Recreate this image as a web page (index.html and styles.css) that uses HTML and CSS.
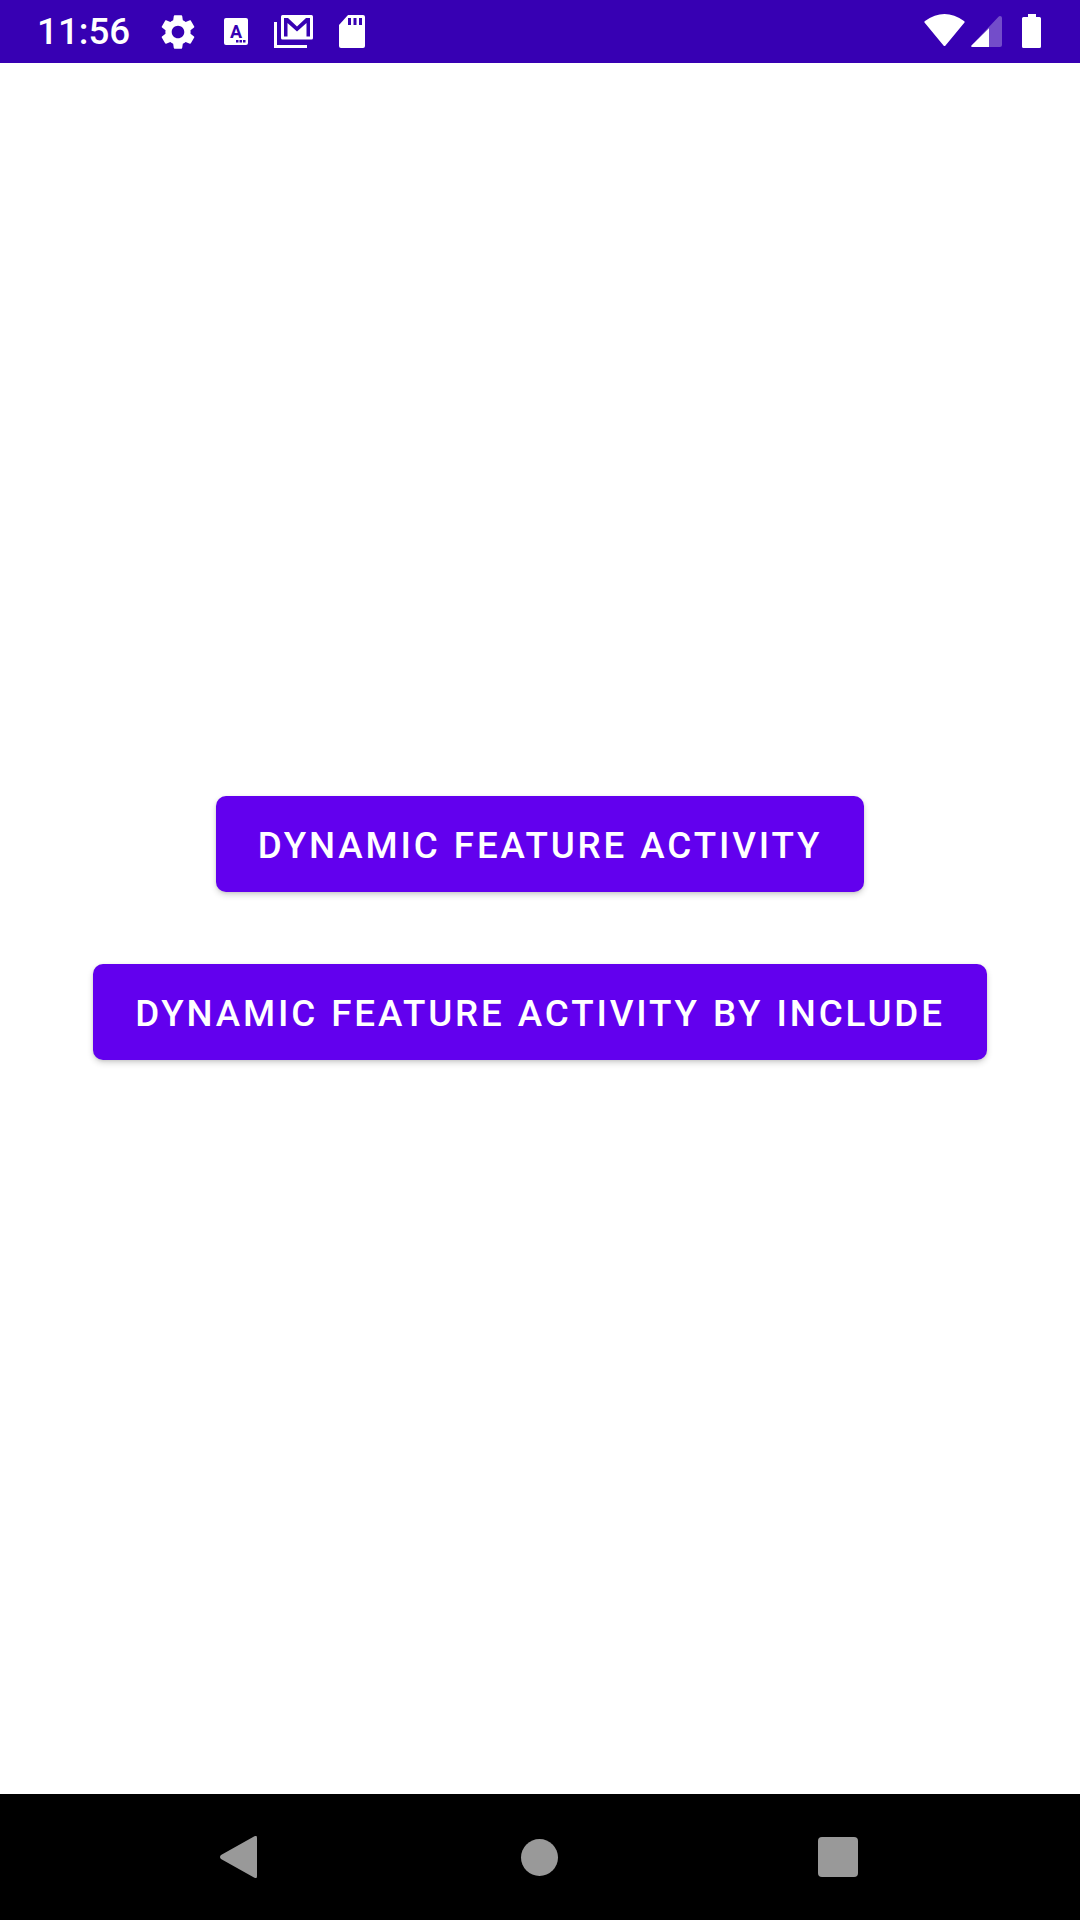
FILE: index.html
```html
<!DOCTYPE html>
<html lang="en">
<head>
<meta charset="utf-8">
<title>Dynamic Feature</title>
<link rel="stylesheet" href="styles.css">
</head>
<body>
<div class="screen">
  <header class="status-bar">
    <div class="status-left">
      <span class="clock">11:56</span>
      <svg class="icon-gear" viewBox="0 0 24 24"><path fill="#fff" d="M19.14 12.94c.04-.3.06-.61.06-.94 0-.32-.02-.64-.07-.94l2.03-1.58c.18-.14.23-.41.12-.61l-1.92-3.32c-.12-.22-.37-.29-.59-.22l-2.39.96c-.5-.38-1.03-.7-1.62-.94l-.36-2.54c-.04-.24-.24-.41-.48-.41h-3.84c-.24 0-.43.17-.47.41l-.36 2.54c-.59.24-1.13.57-1.62.94l-2.39-.96c-.22-.08-.47 0-.59.22L2.74 8.87c-.12.21-.08.47.12.61l2.03 1.58c-.05.3-.09.63-.09.94s.02.64.07.94l-2.03 1.58c-.18.14-.23.41-.12.61l1.92 3.32c.12.22.37.29.59.22l2.39-.96c.5.38 1.03.7 1.62.94l.36 2.54c.05.24.24.41.48.41h3.84c.24 0 .44-.17.47-.41l.36-2.54c.59-.24 1.13-.56 1.62-.94l2.39.96c.22.08.47 0 .59-.22l1.92-3.32c.12-.22.07-.47-.12-.61l-2.01-1.58zM12 15.6c-1.98 0-3.6-1.62-3.6-3.6s1.62-3.6 3.6-3.6 3.6 1.62 3.6 3.6-1.62 3.6-3.6 3.6z"/></svg>
      <svg class="icon-font" viewBox="0 0 24 27"><rect width="24" height="27" rx="2" fill="#fff"/><text x="12" y="20" class="font-letter">A</text><rect x="12" y="22" width="2.500" height="2.500" fill="#3700b3"/><rect x="15.500" y="22" width="2.500" height="2.500" fill="#3700b3"/><rect x="19" y="22" width="2.500" height="2.500" fill="#3700b3"/></svg>
      <svg class="icon-mail" viewBox="0 0 39 33"><path fill="#fff" d="M7 1.500Q7 0 8.500 0H37.500Q39 0 39 1.500V23Q39 24.500 37.500 24.500H8.500Q7 24.500 7 23Z"/><path fill="#3700b3" d="M10 3H14L23 11.500 32 3H36V21.500H32.500V8L23 16.500 13.500 8V21.500H10Z"/><path fill="none" stroke="#fff" stroke-width="3" d="M1.500 7V31.500H33"/></svg>
      <svg class="icon-sd" viewBox="0 0 26 33"><path fill="#fff" d="M9 0H24Q26 0 26 2V31Q26 33 24 33H2Q0 33 0 31V10Z"/><rect x="9" y="3" width="3" height="7" fill="#3700b3"/><rect x="14.500" y="3" width="3" height="7" fill="#3700b3"/><rect x="20" y="3" width="3" height="7" fill="#3700b3"/></svg>
    </div>
    <div class="status-right">
      <svg class="icon-wifi" viewBox="0 0 41 35"><path fill="#fff" d="M.5 8.500Q0 7.500 1 7Q20.500 -7 40 7Q41 7.500 40.500 8.500L21.500 31.500Q20.500 32.500 19.500 31.500Z"/></svg>
      <svg class="icon-signal" viewBox="0 0 31 31"><path fill="#fff" fill-opacity=".3" d="M29 0Q31 0 31 2V29Q31 31 29 31H1.500Q-.5 31 .5 29.500L27.500 .8Q28.200 0 29 0Z"/><path fill="#fff" d="M18 12.300V31H1.500Q-.5 31 .5 29.500Z"/></svg>
      <svg class="icon-battery" viewBox="0 0 19 35"><path fill="#fff" d="M6 0H14V3H17.500Q19 3 19 4.500V32.500Q19 34 17.500 34H1.500Q0 34 0 32.500V4.500Q0 3 1.500 3H6Z"/></svg>
    </div>
  </header>
  <main class="content">
    <button class="action">Dynamic Feature Activity</button>
    <button class="action">Dynamic Feature Activity by include</button>
  </main>
  <nav class="nav-bar">
    <svg class="nav-back" viewBox="0 0 37 42"><path fill="#999" d="M34 .6Q37 -1.500 37 2V40Q37 43.500 34 41.400L1 23Q-1 21 1 19Z"/></svg>
    <span class="nav-home"></span>
    <span class="nav-recent"></span>
  </nav>
</div>
</body>
</html>
```
FILE: styles.css
```css
* { box-sizing: border-box; }
html, body { margin: 0; padding: 0; }
body { width: 1080px; height: 1920px; background: #fff; font-family: Roboto, sans-serif; overflow: hidden; }
.screen { display: flex; flex-direction: column; width: 1080px; height: 1920px; }
.status-bar { display: flex; justify-content: space-between; align-items: center; flex: 0 0 63px; height: 63px; background: #3700b3; padding: 0 39px 0 37px; }
.status-left, .status-right { display: flex; align-items: center; }
.clock { color: #fff; font-size: 36.75px; font-weight: 500; width: 120px; flex: none; }
.icon-gear { width: 42px; height: 42px; margin-right: 25px; }
.icon-font { width: 24px; height: 27px; margin-right: 26px; }
.font-letter { font-family: Roboto, sans-serif; font-weight: 700; font-size: 18px; fill: #3700b3; text-anchor: middle; }
.icon-mail { width: 39px; height: 33px; margin-right: 26px; }
.icon-sd { width: 26px; height: 33px; }
.icon-wifi { width: 41px; height: 35px; margin-right: 6px; }
.icon-signal { width: 31px; height: 31px; margin-right: 20px; }
.icon-battery { width: 19px; height: 35px; }
.content { flex: 1; display: flex; flex-direction: column; align-items: center; justify-content: center; gap: 72px; padding-bottom: 1px; }
.action { height: 96px; padding: 2px 42px 0; border: 0; border-radius: 10px; background: #6200ee; color: #fff; font-family: Roboto, sans-serif; font-size: 36.75px; font-weight: 500; letter-spacing: 2.85px; word-spacing: 1.2px; text-transform: uppercase; box-shadow: 0 3px 6px rgba(0,0,0,.16), 0 1px 3px rgba(0,0,0,.1); white-space: nowrap; }
.nav-bar { flex: 0 0 126px; height: 126px; background: #000; display: flex; align-items: center; padding-left: 220px; }
.nav-back { width: 37px; height: 42px; margin-right: 264px; }
.nav-home { width: 37px; height: 37px; border-radius: 50%; background: #999; margin-right: 260px; }
.nav-recent { width: 40px; height: 40px; border-radius: 4px; background: #999; }
```
